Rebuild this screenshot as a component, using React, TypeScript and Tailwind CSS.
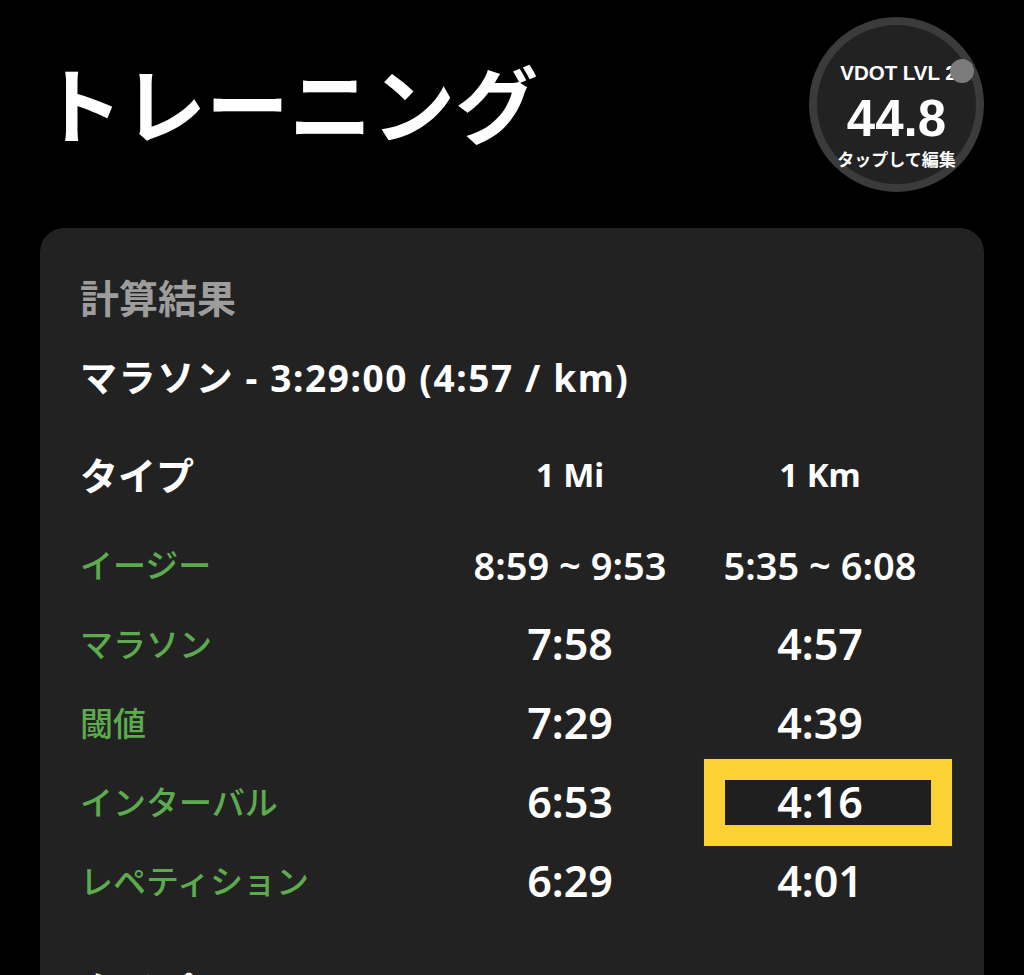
import React from 'react'

type Row = { label: string; mi: string; km: string; range?: boolean; highlight?: boolean }

const ROWS: Row[] = [
  { label: 'イージー', mi: '8:59 ~ 9:53', km: '5:35 ~ 6:08', range: true },
  { label: 'マラソン', mi: '7:58', km: '4:57' },
  { label: '閾値', mi: '7:29', km: '4:39' },
  { label: 'インターバル', mi: '6:53', km: '4:16', highlight: true },
  { label: 'レペティション', mi: '6:29', km: '4:01' },
]

const FONT = { fontFamily: '"Noto Sans", "Noto Sans CJK JP", sans-serif' }
const ARIAL = { fontFamily: '"Liberation Sans", Arial, sans-serif' }

function VdotBadge() {
  return (
    <div className="relative w-[175px] h-[175px] rounded-full border-[8px] border-[#3b3b3b] bg-[#222222] flex flex-col items-center">
      <span className="absolute right-[2px] top-[34px] w-[24px] h-[24px] rounded-full bg-[#7b7b7b]" />
      <div className="mt-[38px] ml-[4px] text-[20.5px] leading-none font-bold text-white" style={ARIAL}>
        VDOT LVL 2
      </div>
      <div className="mt-[9px] text-[51px] leading-none font-bold text-white" style={ARIAL}>
        44.8
      </div>
      <div className="mt-[7px] text-[17px] leading-none font-bold text-white" style={FONT}>
        タップして編集
      </div>
    </div>
  )
}

export default function App() {
  return (
    <div className="min-h-screen bg-black text-white" style={FONT}>
      {/* Header */}
      <div className="flex items-center justify-between pl-[40px] pr-[40px] pt-[17px]">
        <h1 className="text-[83px] leading-none font-semibold">トレーニング</h1>
        <VdotBadge />
      </div>

      {/* Result card */}
      <div className="mx-[40px] mt-[36px] bg-[#222222] rounded-[24px] px-[40px] pt-[45px] pb-[40px]">
        <div className="h-[50px] flex items-center text-[39px] font-semibold text-[#9d9d9d]">計算結果</div>
        <div className="mt-[30px] h-[50px] flex items-center text-[37px] font-bold tracking-[1.6px]">
          マラソン - 3:29:00 (4:57 / km)
        </div>

        <div className="mt-[42px] grid grid-cols-[365px_250px_250px]">
          <div className="h-[60px] flex items-center text-[38px] font-semibold">タイプ</div>
          <div className="h-[60px] flex items-center justify-center text-[33px] font-bold">1 Mi</div>
          <div className="h-[60px] flex items-center justify-center text-[33px] font-bold">1 Km</div>
        </div>

        <div className="mt-[21px] flex flex-col">
          {ROWS.map((r) => (
            <div key={r.label} className="h-[79px] grid grid-cols-[365px_250px_250px] items-center">
              <div className="text-[33px] font-medium text-[#5cab4d]">{r.label}</div>
              <div
                className={
                  r.range
                    ? 'text-center text-[38px] font-semibold'
                    : 'text-center text-[43px] font-semibold'
                }
              >
                {r.mi}
              </div>
              <div className="relative h-full flex items-center justify-center">
                {r.highlight && (
                  <span className="absolute left-[9px] right-[-7px] top-[-4px] bottom-[-4px] border-[21px] border-[#fcd133] outline outline-1 outline-[#2a2a1a] bg-[#1f1f1f]" />
                )}
                <span
                  className={
                    r.range
                      ? 'relative text-[38px] font-semibold'
                      : 'relative text-[43px] font-semibold'
                  }
                >
                  {r.km}
                </span>
              </div>
            </div>
          ))}
        </div>

        <div className="mt-[39px] h-[60px] flex items-center text-[38px] font-semibold">タイプ</div>
        <div className="h-[200px]" />
      </div>
    </div>
  )
}
